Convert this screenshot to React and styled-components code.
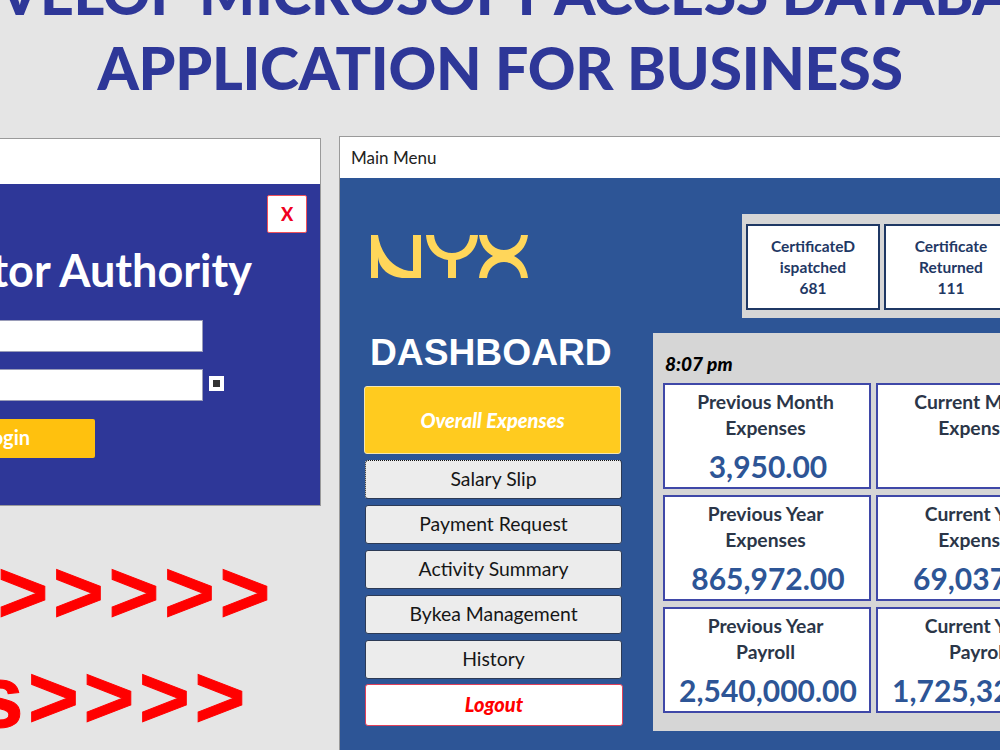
import React from 'react';
import styled, { createGlobalStyle } from 'styled-components';

const GlobalStyle = createGlobalStyle`
  html, body {
    margin: 0;
    padding: 0;
    overflow: hidden;
    background: #e5e5e5;
  }
`;

const Stage = styled.div`
  position: relative;
  width: 1000px;
  height: 750px;
  overflow: hidden;
  background: #e5e5e5;
`;

const Headline = styled.h1`
  margin: -45px 0 0 -200px;
  width: 1400px;
  font-family: Lato, 'Liberation Sans', sans-serif;
  font-weight: 900;
  font-size: 59px;
  line-height: 75px;
  letter-spacing: -0.3px;
  text-align: center;
  color: #2e3798;
  white-space: nowrap;
`;

const Window = styled.section`
  position: absolute;
  left: ${(p) => p.$left}px;
  top: ${(p) => p.$top}px;
  width: ${(p) => p.$width}px;
  height: ${(p) => p.$height}px;
  display: flex;
  flex-direction: column;
  box-shadow: 0 0 0 1px #9a9a9a;
`;

const TitleBar = styled.div`
  height: ${(p) => p.$height}px;
  flex: none;
  display: flex;
  align-items: center;
  padding-left: 11px;
  background: #fff;
  font-family: Lato, sans-serif;
  font-size: 17px;
  color: #222;
`;

const LoginBody = styled.div`
  flex: 1;
  display: flex;
  flex-direction: column;
  background: #2e3798;
`;

const CloseRow = styled.div`
  display: flex;
  justify-content: flex-end;
  padding: 11px 13px 0 0;
`;

const CloseButton = styled.div`
  width: 40px;
  height: 38px;
  box-sizing: border-box;
  display: flex;
  align-items: center;
  justify-content: center;
  background: #fff;
  border: 1px solid #f0505a;
  border-radius: 2px;
  font-family: Lato, sans-serif;
  font-weight: 900;
  font-size: 18px;
  color: #f00020;
`;

const LoginTitle = styled.h2`
  margin: 12px 0 26px;
  width: 552px;
  font-family: Lato, sans-serif;
  font-weight: 700;
  font-size: 45px;
  line-height: 50px;
  text-align: right;
  white-space: nowrap;
  color: #fff;
`;

const FieldRow = styled.div`
  display: flex;
  align-items: flex-start;
  gap: 7px;
  margin-bottom: 19px;
`;

const Field = styled.div`
  width: 502px;
  height: 30px;
  background: #fff;
  box-shadow: 0 0 0 1px #9a9cb8;
`;

const ShowCheck = styled.div`
  width: 15px;
  height: 15px;
  box-sizing: border-box;
  border: 4px solid #fff;
  background: #333;
  margin-top: 6px;
`;

const LoginButton = styled.div`
  width: 395px;
  height: 39px;
  display: flex;
  align-items: center;
  justify-content: flex-end;
  box-sizing: border-box;
  padding: 0 65px 3px 0;
  background: #ffc10e;
  border-radius: 2px;
  font-family: Lato, sans-serif;
  font-weight: 700;
  font-size: 20px;
  color: #fff;
`;

const Chevrons = styled.div`
  position: absolute;
  right: ${(p) => p.$right}px;
  top: ${(p) => p.$top}px;
  font-family: 'Liberation Sans', sans-serif;
  font-weight: 700;
  font-size: 87px;
  line-height: 100px;
  letter-spacing: 4.7px;
  white-space: nowrap;
  color: #ff0000;
  -webkit-text-stroke: 1px #ff0000;
`;

const MainBody = styled.div`
  flex: 1;
  display: flex;
  background: #2d5596;
`;

const Sidebar = styled.div`
  width: 313px;
  flex: none;
  display: flex;
  flex-direction: column;
  align-items: flex-start;
  box-sizing: border-box;
  padding: 57px 0 0 24px;
`;

const Logo = styled.svg`
  display: block;
  margin-left: 7px;
`;

const DashboardTitle = styled.h2`
  margin: 54px 0 14px 6px;
  font-family: 'Liberation Sans', sans-serif;
  font-weight: 700;
  font-size: 37.2px;
  line-height: 40px;
  color: #fff;
`;

const OverallButton = styled.div`
  width: 257px;
  height: 68px;
  box-sizing: border-box;
  margin-bottom: 6px;
  display: flex;
  align-items: center;
  justify-content: center;
  background: #ffcb1f;
  border: 1px solid #f5e6b0;
  border-radius: 3px;
  font-family: Lato, sans-serif;
  font-weight: 900;
  font-style: italic;
  font-size: 20px;
  color: #fff;
`;

const MenuButton = styled.div`
  width: 257px;
  height: 39px;
  margin: 0 0 6px 1px;
  padding-bottom: 2px;
  box-sizing: border-box;
  display: flex;
  align-items: center;
  justify-content: center;
  background: #ececec;
  border: 1px solid #2c3a55;
  border-radius: 3px;
  font-family: Lato, sans-serif;
  font-size: 19.4px;
  color: #161616;
  ${(p) => p.$focused && 'border-top: 1px dotted #111; border-left: 1px dotted #111;'}
`;

const LogoutButton = styled.div`
  width: 258px;
  height: 42px;
  margin: -1px 0 0 1px;
  padding-bottom: 2px;
  box-sizing: border-box;
  display: flex;
  align-items: center;
  justify-content: center;
  background: #fff;
  border: 1px solid #e0405a;
  border-radius: 3px;
  font-family: Lato, sans-serif;
  font-weight: 900;
  font-style: italic;
  font-size: 20px;
  color: #ff0000;
`;

const Content = styled.div`
  flex: 1;
  display: flex;
  flex-direction: column;
  padding-top: 36px;
`;

const TopPanel = styled.div`
  margin-left: 89px;
  height: 104px;
  box-sizing: border-box;
  padding: 10px 0 8px 4px;
  display: flex;
  gap: 4px;
  background: #d6d6d6;
  margin-bottom: 15px;
`;

const CertCard = styled.div`
  width: 134px;
  box-sizing: border-box;
  display: flex;
  flex-direction: column;
  align-items: center;
  justify-content: center;
  background: #fff;
  border: 2px solid #1f3864;
  font-family: Lato, sans-serif;
  font-weight: 700;
  font-size: 15.5px;
  line-height: 21px;
  color: #1f3864;
`;

const BigPanel = styled.div`
  height: 398px;
  box-sizing: border-box;
  padding: 16px 0 0 10px;
  background: #d6d6d6;
`;

const Clock = styled.div`
  height: 34px;
  padding-left: 2px;
  font-family: Lato, sans-serif;
  font-weight: 900;
  font-style: italic;
  font-size: 19px;
  line-height: 30px;
  color: #000;
`;

const StatGrid = styled.div`
  display: grid;
  grid-template-columns: 208px 208px;
  grid-auto-rows: 106px;
  column-gap: 5px;
  row-gap: 6px;
`;

const StatCard = styled.div`
  box-sizing: border-box;
  display: flex;
  flex-direction: column;
  align-items: center;
  padding-top: 4px;
  background: #fff;
  border: 2px solid #3f48a8;
  font-family: Lato, sans-serif;
  text-align: center;
`;

const StatLabel = styled.div`
  padding-right: 3px;
  font-weight: 700;
  font-size: 19.3px;
  line-height: 26px;
  color: #2b3648;
  white-space: nowrap;
`;

const StatValue = styled.div`
  margin-top: 5px;
  padding-left: 2px;
  font-weight: 700;
  font-size: 30px;
  line-height: 40px;
  color: #2d5596;
  white-space: nowrap;
`;

const stats = [
  ['Previous Month', 'Expenses', '3,950.00'],
  ['Current Month', 'Expenses', ''],
  ['Previous Year', 'Expenses', '865,972.00'],
  ['Current Year', 'Expenses', '69,037.00'],
  ['Previous Year', 'Payroll', '2,540,000.00'],
  ['Current Year', 'Payroll', '1,725,320.00'],
];

const menu = ['Salary Slip', 'Payment Request', 'Activity Summary', 'Bykea Management', 'History'];

export default function App() {
  return (
    <Stage>
      <GlobalStyle />
      <Headline>
        DEVELOP MICROSOFT ACCESS DATABASE
        <br />
        APPLICATION FOR BUSINESS
      </Headline>

      <Window $left={-300} $top={139} $width={620} $height={366}>
        <TitleBar $height={45} />
        <LoginBody>
          <CloseRow>
            <CloseButton>X</CloseButton>
          </CloseRow>
          <LoginTitle>Administrator Authority</LoginTitle>
          <FieldRow>
            <Field />
          </FieldRow>
          <FieldRow>
            <Field />
            <ShowCheck />
          </FieldRow>
          <LoginButton>Login</LoginButton>
        </LoginBody>
      </Window>

      <Chevrons $right={725} $top={542}>{'>>>>>>'}</Chevrons>
      <Chevrons $right={750} $top={647}>{'s>>>>'}</Chevrons>

      <Window $left={340} $top={137} $width={760} $height={640}>
        <TitleBar $height={41}>Main Menu</TitleBar>
        <MainBody>
          <Sidebar>
            <Logo width="157" height="43" viewBox="0 0 157 43" fill="#ffd65a">
              <path d="M0 0h7c2 16 14 36 35 36V0h8v43H34C18 43 8 33 7 22v21H0z" />
              <path d="M55 0h8c1 11 8 18 18 18s17-7 18-18h8c-1 14-9 23-22 25v18h-8V25C64 23 56 14 55 0z" />
              <path d="M108 0h8c1 9 9 15 17 15s16-6 17-15h7c-1 9-6 17-14 21 8 4 13 12 14 22h-7c-1-10-9-16-17-16s-16 6-17 16h-8c1-10 6-18 14-22-8-4-13-12-14-21z" />
            </Logo>
            <DashboardTitle>DASHBOARD</DashboardTitle>
            <OverallButton>Overall Expenses</OverallButton>
            {menu.map((item, i) => (
              <MenuButton key={item} $focused={i === 0}>{item}</MenuButton>
            ))}
            <LogoutButton>Logout</LogoutButton>
          </Sidebar>
          <Content>
            <TopPanel>
              <CertCard>
                <span>CertificateD</span>
                <span>ispatched</span>
                <span>681</span>
              </CertCard>
              <CertCard>
                <span>Certificate</span>
                <span>Returned</span>
                <span>111</span>
              </CertCard>
            </TopPanel>
            <BigPanel>
              <Clock>8:07 pm</Clock>
              <StatGrid>
                {stats.map(([a, b, value], i) => (
                  <StatCard key={i}>
                    <StatLabel>{a}</StatLabel>
                    <StatLabel>{b}</StatLabel>
                    <StatValue>{value}</StatValue>
                  </StatCard>
                ))}
              </StatGrid>
            </BigPanel>
          </Content>
        </MainBody>
      </Window>
    </Stage>
  );
}
